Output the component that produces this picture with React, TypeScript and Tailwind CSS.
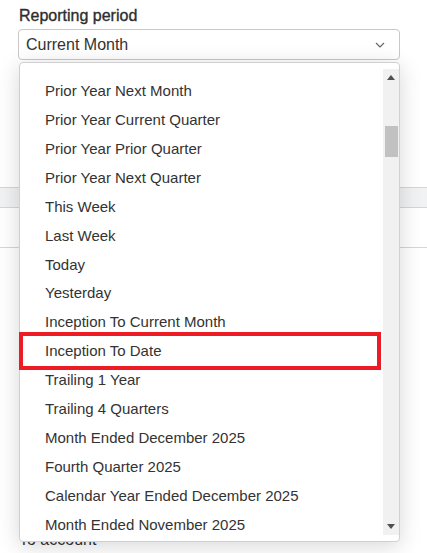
import React from 'react';

const OPTIONS = [
  'Prior Year Next Month',
  'Prior Year Current Quarter',
  'Prior Year Prior Quarter',
  'Prior Year Next Quarter',
  'This Week',
  'Last Week',
  'Today',
  'Yesterday',
  'Inception To Current Month',
  'Inception To Date',
  'Trailing 1 Year',
  'Trailing 4 Quarters',
  'Month Ended December 2025',
  'Fourth Quarter 2025',
  'Calendar Year Ended December 2025',
  'Month Ended November 2025',
];

export default function App() {
  return (
    <div className="relative w-[427px] h-[553px] overflow-hidden bg-white text-[#333] font-['Liberation_Sans',Arial,sans-serif]">
      {/* Form behind the dropdown */}
      <div className="flex flex-col">
        <div className="px-[19px] pt-[6px]">
          <div className="text-[16px] leading-[20px] text-[#2d2d2d] [-webkit-text-stroke:0.35px_#2d2d2d]">Reporting period</div>
          <div className="mt-[3px] flex h-[31px] w-[382px] -ml-[1px] items-center justify-between rounded-[4px] border border-[#c8c8c8] pl-[7px] pr-[14px] text-[16px]">
            <span>Current Month</span>
            <svg width="10" height="6" viewBox="0 0 10 6" fill="none">
              <path d="M1 1l4 4 4-4" stroke="#666" strokeWidth="1.2" />
            </svg>
          </div>
        </div>
        <div className="px-[19px] pt-[12px] flex flex-col gap-[14px]">
          <div className="text-[15px] leading-[20px] text-[#333]">Group by</div>
          <div className="h-[34px] w-[381px] rounded-[4px] border border-[#888]" />
        </div>
        <div className="mt-[47px] h-[21px] border-y border-[#d4d6d8] bg-[#f0f2f4]" />
        <div className="mt-[39px] border-t border-[#d4d6d8]" />
        <div className="px-[19px] pt-[42px] flex flex-col">
          <div className="h-[36px] w-[381px] rounded-[4px] border border-[#888]" />
          <div className="mt-[24px] h-[32px] w-[381px] rounded-[4px] border border-[#888]" />
          <div className="mt-[36px] h-[32px] w-[381px] rounded-[4px] border border-[#888]" />
          <div className="mt-[34px] h-[32px] w-[381px] rounded-[4px] border border-[#888]" />
          <div className="mt-[14px] text-[16px] leading-[20px]">To account</div>
        </div>
      </div>

      {/* Open dropdown list */}
      <div className="absolute left-[19px] top-[62px] flex h-[480px] w-[381px] rounded-[4px] border border-[#d0d0d0] bg-white py-[6px] shadow-[0_4px_22px_rgba(0,0,0,0.16)]">
        <div className="flex-1 overflow-hidden pt-[8px]">
          {OPTIONS.map((opt) => (
            <div key={opt} className="flex h-[28.9px] items-center pl-[25px] text-[15px] text-[#333] whitespace-nowrap">
              {opt}
            </div>
          ))}
        </div>
        <div className="flex w-[16px] flex-col items-center bg-[#f1f1f1]">
          <svg className="mt-[6px]" width="8" height="5" viewBox="0 0 8 5">
            <path d="M0 5L4 0L8 5Z" fill="#505050" />
          </svg>
          <div className="mt-[46px] h-[31px] w-[13px] bg-[#c1c1c1]" />
          <div className="flex-1" />
          <svg className="mb-[6px]" width="8" height="5" viewBox="0 0 8 5">
            <path d="M0 0L8 0L4 5Z" fill="#505050" />
          </svg>
        </div>
      </div>

      {/* Highlight box */}
      <div className="absolute left-[19px] top-[332px] h-[38px] w-[362px] border-[4px] border-[#ed1c24]" />
    </div>
  );
}
